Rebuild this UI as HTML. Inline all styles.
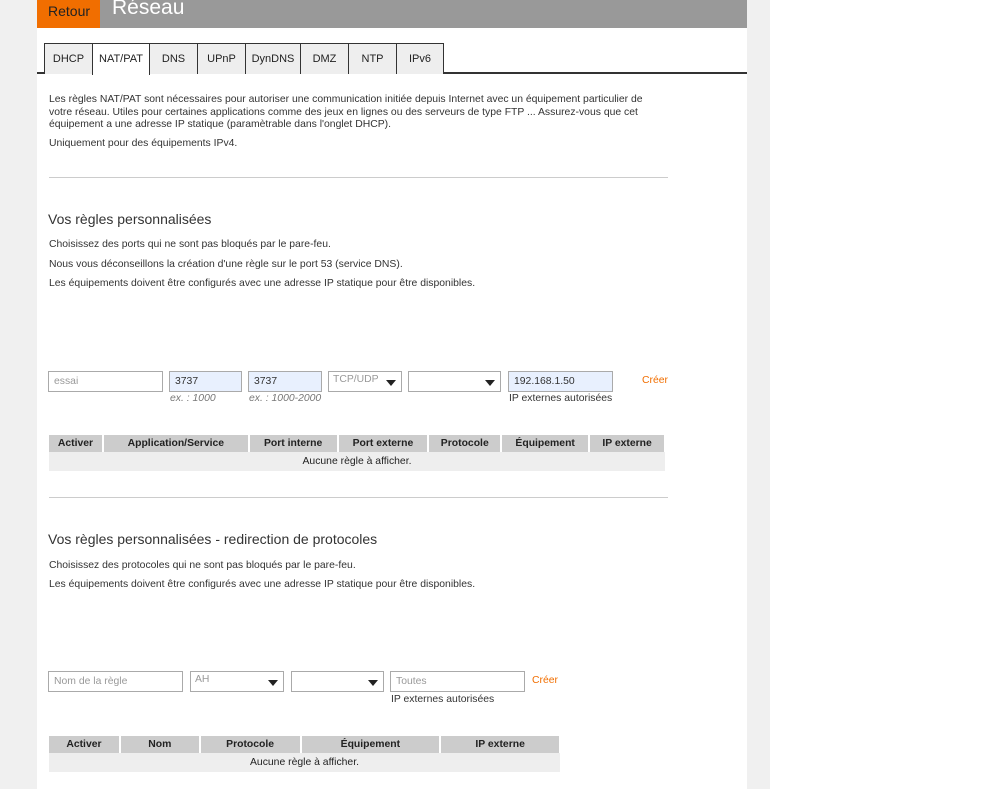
<!DOCTYPE html>
<html><head><meta charset="utf-8"><style>
*{margin:0;padding:0;box-sizing:border-box}
body{width:999px;height:789px;background:#fff;font-family:"Liberation Sans",Arial,sans-serif;font-size:10.4px;color:#333;position:relative;overflow:hidden}
.a{position:absolute}
.t{position:absolute;white-space:nowrap}
.inp{position:absolute;height:21px;border:1px solid #aaa;background:#fff;font-size:10.4px;padding:4px 5px;color:#999}
.blue{background:#e8f0fe;color:#333}
.sel{position:absolute;height:21px;border:1px solid #aaa;background:#fff;color:#999;font-size:10.4px;padding:2px 4px}
.arr{position:absolute;right:5px;top:8px;width:0;height:0;border-left:5px solid transparent;border-right:5px solid transparent;border-top:6px solid #222}
.hint{position:absolute;font-style:italic;color:#777;font-size:10.4px}
.cree{position:absolute;color:#f16e00;font-size:10.4px}
table{position:absolute;border-collapse:collapse;font-size:10.4px}
th{background:#ccc;font-weight:bold;color:#222;height:17px;border-right:2px solid #fff;padding:0}
td{background:#eee;height:19px;text-align:center;color:#222}
.tab{position:absolute;top:43px;height:31px;border:1px solid #333;border-bottom:none;background:#eee;text-align:center;line-height:30px;font-size:11px;color:#222}
</style></head><body>
<div class="a" style="left:0;top:0;width:37px;height:789px;background:#f0f0f0"></div>
<div class="a" style="left:747px;top:0;width:23px;height:789px;background:#f0f0f0"></div>
<div class="a" style="left:37px;top:0;width:710px;height:28px;background:#999"></div>
<div class="a" style="left:37px;top:0;width:63px;height:28px;background:#f16e00;color:#222;font-size:14px;padding:3px 0 0 11px">Retour</div>
<div class="t" style="left:112px;top:-4px;font-size:21px;color:#fff">Réseau</div>
<div class="a" style="left:37px;top:72px;width:710px;height:2px;background:#333"></div>
<div class="tab" style="left:44px;width:49px">DHCP</div>
<div class="tab" style="left:92px;width:58px;background:#fff;height:32px">NAT/PAT</div>
<div class="tab" style="left:149px;width:49px">DNS</div>
<div class="tab" style="left:197px;width:49px">UPnP</div>
<div class="tab" style="left:245px;width:56px">DynDNS</div>
<div class="tab" style="left:300px;width:49px">DMZ</div>
<div class="tab" style="left:348px;width:49px">NTP</div>
<div class="tab" style="left:396px;width:48px">IPv6</div>
<div class="t" style="left:49px;top:94px;line-height:12.7px">Les règles NAT/PAT sont nécessaires pour autoriser une communication initiée depuis Internet avec un équipement particulier de<br>votre réseau. Utiles pour certaines applications comme des jeux en lignes ou des serveurs de type FTP ... Assurez-vous que cet<br>équipement a une adresse IP statique (paramètrable dans l'onglet DHCP).</div>
<div class="t" style="left:49px;top:138px">Uniquement pour des équipements IPv4.</div>
<div class="a" style="left:49px;top:177px;width:619px;height:1px;background:#ccc"></div>
<div class="t" style="left:48px;top:211px;font-size:14px;color:#333">Vos règles personnalisées</div>
<div class="t" style="left:49px;top:239px">Choisissez des ports qui ne sont pas bloqués par le pare-feu.</div>
<div class="t" style="left:49px;top:259px">Nous vous déconseillons la création d'une règle sur le port 53 (service DNS).</div>
<div class="t" style="left:49px;top:278px">Les équipements doivent être configurés avec une adresse IP statique pour être disponibles.</div>
<div class="inp" style="left:48px;top:371px;width:115px">essai</div>
<div class="inp blue" style="left:169px;top:371px;width:73px">3737</div>
<div class="inp blue" style="left:248px;top:371px;width:74px">3737</div>
<div class="hint" style="left:170px;top:393px">ex. : 1000</div>
<div class="hint" style="left:249px;top:393px">ex. : 1000-2000</div>
<div class="sel" style="left:328px;top:371px;width:74px">TCP/UDP<span class="arr"></span></div>
<div class="sel" style="left:408px;top:371px;width:93px"><span class="arr"></span></div>
<div class="inp blue" style="left:508px;top:371px;width:105px">192.168.1.50</div>
<div class="t" style="left:509px;top:393px">IP externes autorisées</div>
<div class="cree" style="left:642px;top:375px">Créer</div>
<table style="left:49px;top:435px;width:617px">
<tr><th style="width:54px">Activer</th><th style="width:146px">Application/Service</th><th style="width:89px">Port interne</th><th style="width:91px">Port externe</th><th style="width:73px">Protocole</th><th style="width:88px">Équipement</th><th style="width:76px">IP externe</th></tr>
<tr><td colspan="7">Aucune règle à afficher.</td></tr></table>
<div class="a" style="left:49px;top:497px;width:619px;height:1px;background:#ccc"></div>
<div class="t" style="left:48px;top:531px;font-size:14px;color:#333">Vos règles personnalisées - redirection de protocoles</div>
<div class="t" style="left:49px;top:560px">Choisissez des protocoles qui ne sont pas bloqués par le pare-feu.</div>
<div class="t" style="left:49px;top:579px">Les équipements doivent être configurés avec une adresse IP statique pour être disponibles.</div>
<div class="inp" style="left:48px;top:671px;width:135px">Nom de la règle</div>
<div class="sel" style="left:190px;top:671px;width:94px">AH<span class="arr"></span></div>
<div class="sel" style="left:291px;top:671px;width:93px"><span class="arr"></span></div>
<div class="inp" style="left:390px;top:671px;width:135px">Toutes</div>
<div class="t" style="left:391px;top:694px">IP externes autorisées</div>
<div class="cree" style="left:532px;top:675px">Créer</div>
<table style="left:49px;top:736px;width:512px">
<tr><th style="width:71px">Activer</th><th style="width:80px">Nom</th><th style="width:101px">Protocole</th><th style="width:140px">Équipement</th><th style="width:120px">IP externe</th></tr>
<tr><td colspan="5">Aucune règle à afficher.</td></tr></table>
</body></html>
